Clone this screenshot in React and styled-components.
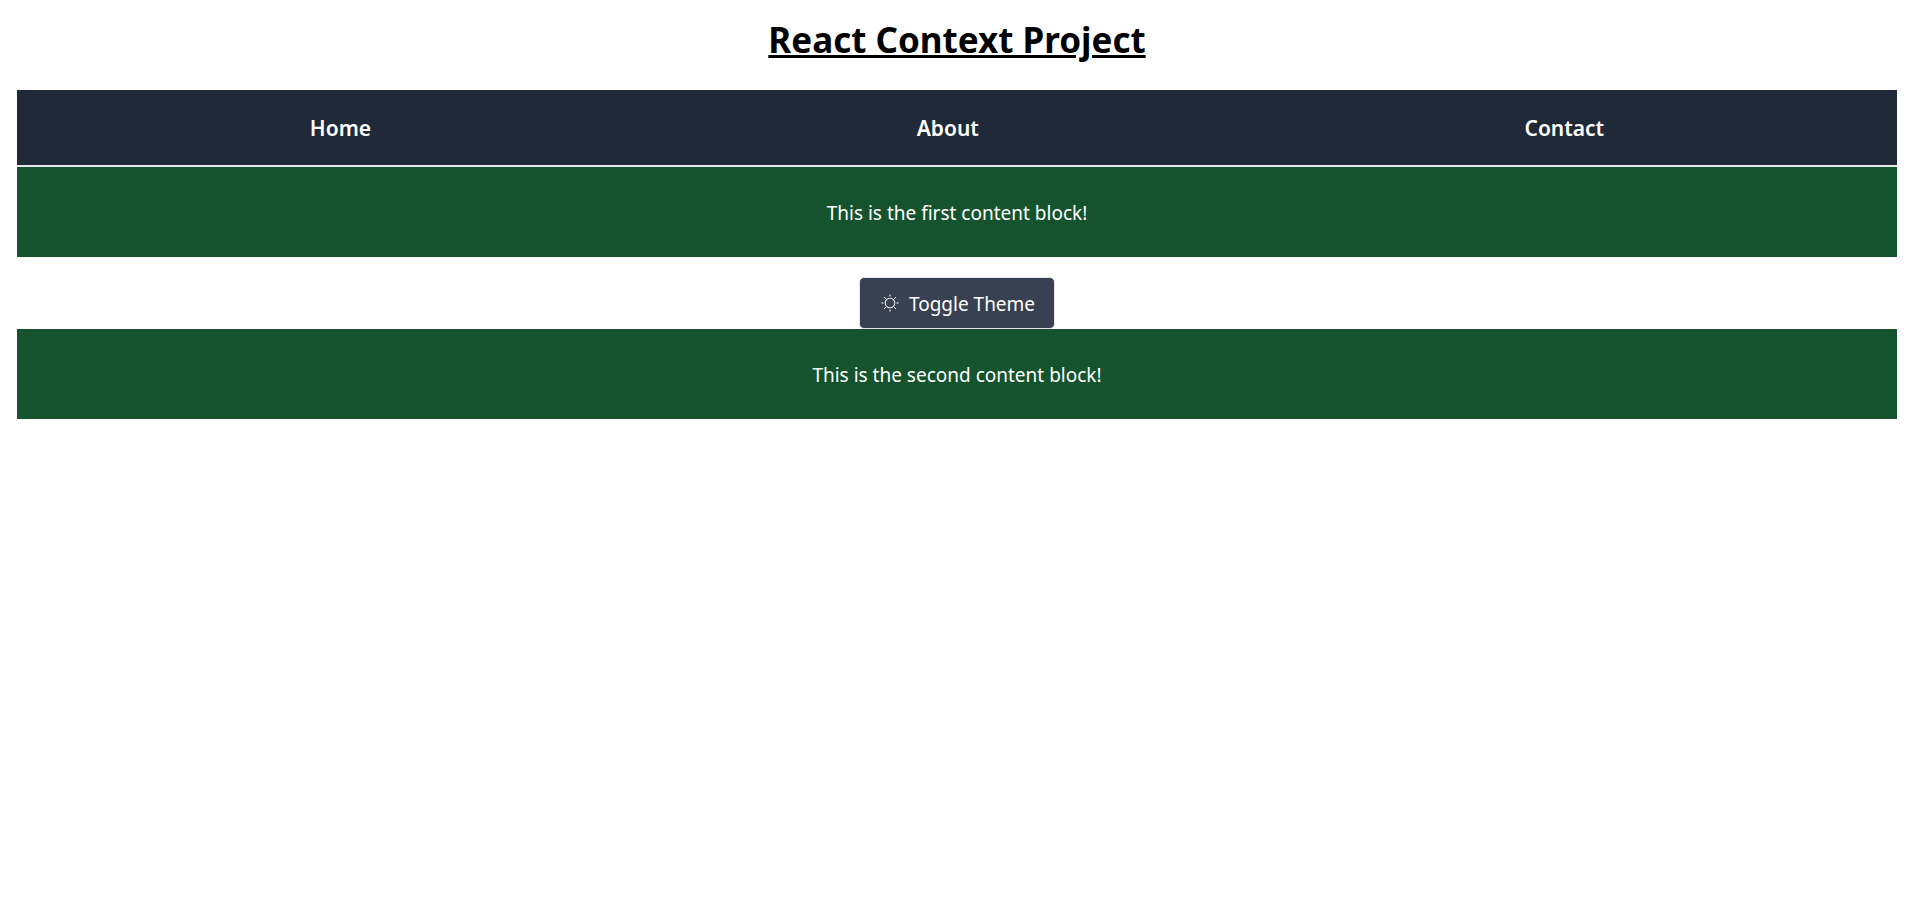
import React, { useState } from "react";
import styled, { createGlobalStyle } from "styled-components";

const GlobalStyle = createGlobalStyle`
  *, *::before, *::after { box-sizing: border-box; }
  body {
    margin: 0;
    background: #ffffff;
    color: #000000;
    font-family: "Segoe UI", "Noto Sans", "Open Sans", sans-serif;
    font-size: 19px;
    line-height: 28px;
  }
`;

const Page = styled.main`
  padding: 18px 19px 18px 17px;
`;

const Title = styled.h1`
  margin: 0 0 28px;
  font-size: 35px;
  line-height: 44px;
  font-weight: 700;
  text-align: center;
  text-decoration: underline;
  text-decoration-thickness: 3px;
  text-underline-offset: 2px;
`;

const NavBar = styled.nav`
  padding: 21px 20px 19px;
  background: #1f2937;
  border-bottom: 2px solid #e5e7eb;
`;

const NavList = styled.ul`
  display: flex;
  justify-content: space-around;
  margin: 0;
  padding: 0;
  list-style: none;
`;

const NavLink = styled.a`
  display: block;
  color: #ffffff;
  font-size: 21px;
  line-height: 35px;
  font-weight: 600;
  text-decoration: none;
`;

const ContentBlock = styled.section`
  padding: 32px 20px 30px;
  background: #14532d;
  color: #ffffff;
  text-align: center;
`;

const ToggleArea = styled.div`
  display: flex;
  justify-content: center;
  padding-top: 20px;
`;

const ToggleButton = styled.button`
  display: flex;
  align-items: center;
  gap: 10px;
  padding: 12px 19px 10px;
  border: 1px solid #e5e7eb;
  border-radius: 5px;
  background: #374151;
  color: #ffffff;
  font: inherit;
  cursor: pointer;
`;

const SunIcon = () => (
  <svg width="20" height="20" viewBox="0 0 20 20" fill="none" stroke="#e5e7eb" aria-hidden="true">
    <circle cx="11" cy="9" r="4.8" strokeWidth="1.1" />
    <path d="M5 3l2 2M15 13l2 2M17 3l-2 2M7 13l-2 2" />
    <path d="M11 0.5v2M11 15.5v2M2.5 9h2M17.5 9h2" strokeOpacity="0.6" strokeWidth="2" />
  </svg>
);

const links = ["Home", "About", "Contact"];

export default function App() {
  const [, setDark] = useState(true);
  return (
    <>
      <GlobalStyle />
      <Page>
        <Title>React Context Project</Title>
        <NavBar>
          <NavList>
            {links.map((name) => (
              <li key={name}>
                <NavLink href={`#${name.toLowerCase()}`}>{name}</NavLink>
              </li>
            ))}
          </NavList>
        </NavBar>
        <ContentBlock>This is the first content block!</ContentBlock>
        <ToggleArea>
          <ToggleButton type="button" onClick={() => setDark((dark) => !dark)}>
            <SunIcon />
            Toggle Theme
          </ToggleButton>
        </ToggleArea>
        <ContentBlock>This is the second content block!</ContentBlock>
      </Page>
    </>
  );
}
